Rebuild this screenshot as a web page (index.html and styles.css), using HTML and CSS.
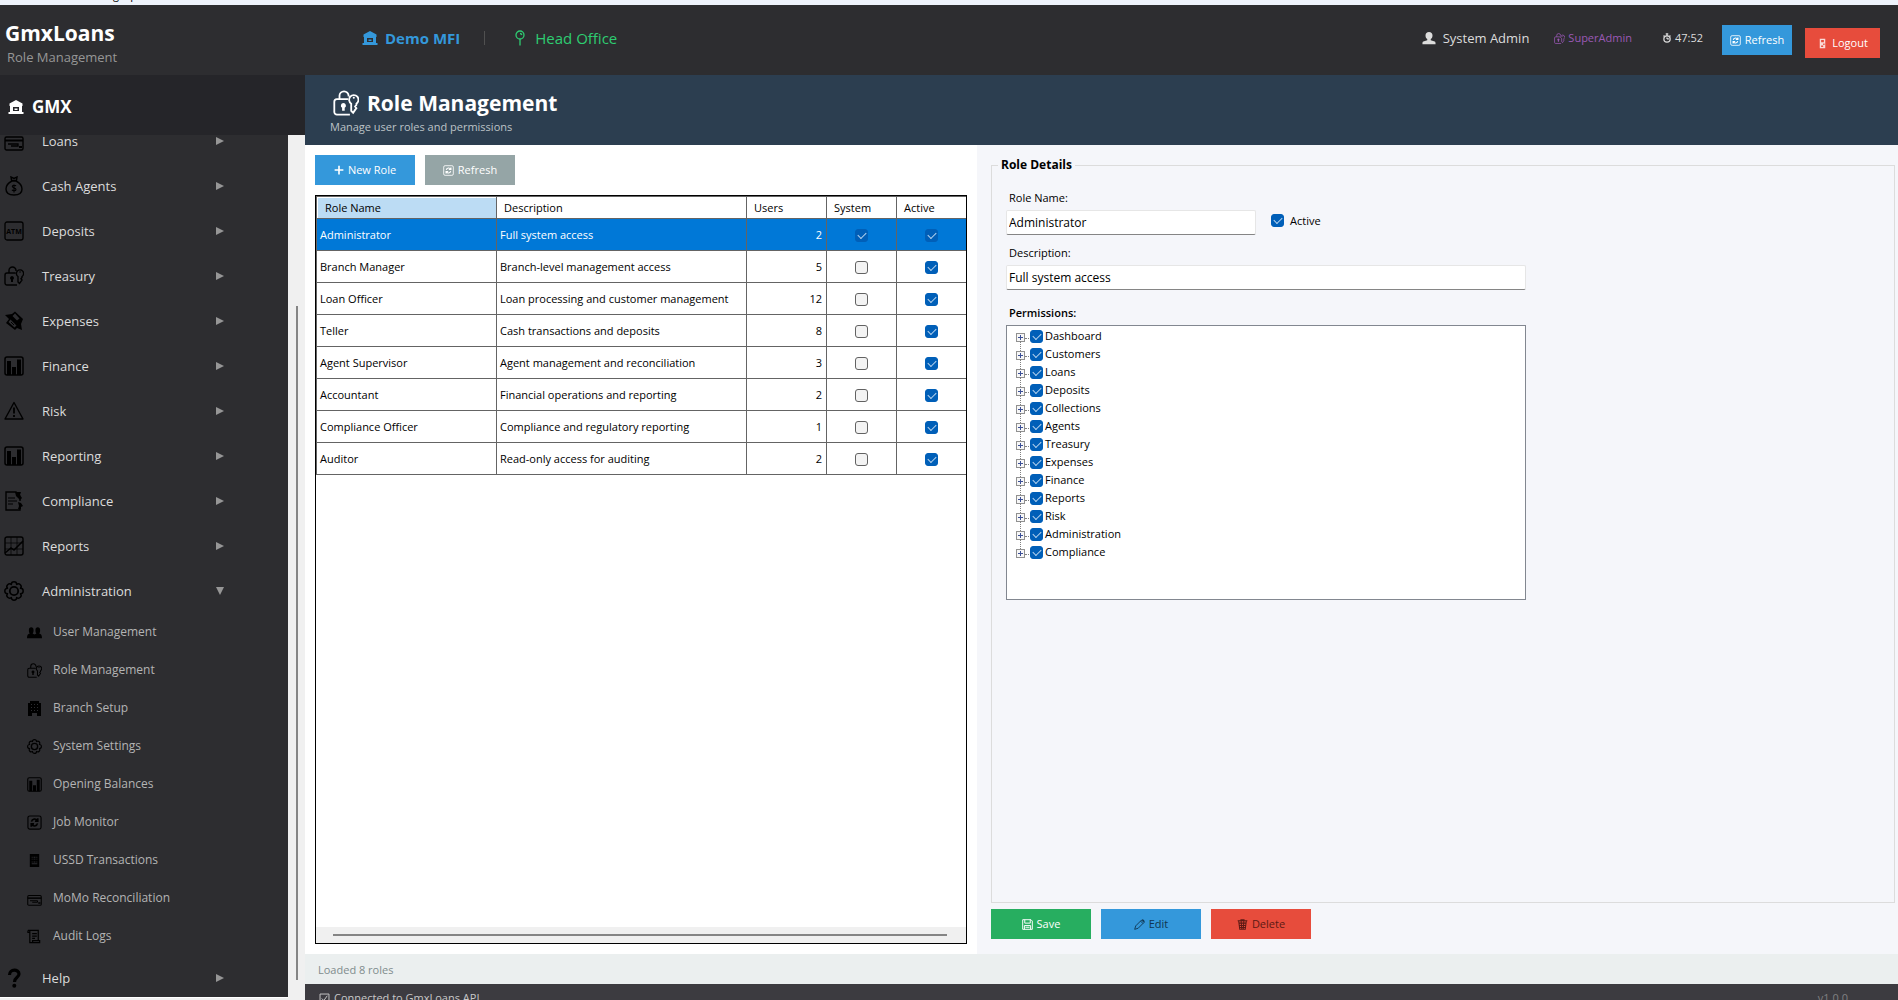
FILE: index.html
```html
<!DOCTYPE html>
<html lang="en">
<head>
    <meta charset="UTF-8">
    <meta name="viewport" content="width=device-width, initial-scale=1.0">
    <title>GmxLoans - Role Management</title>
    <link rel="stylesheet" href="styles.css">
</head>
<body>

<svg class="sprite" aria-hidden="true">
    <symbol id="i-bank" viewBox="0 0 16 16"><path fill="currentColor" fill-rule="evenodd" d="M8 1l6.500 3.500V7H14v6h1.500v2H.5v-2H2V7h-.5V4.500zM5 8v4h6V8zM6.500 9.500h3v1.500h-3z"/></symbol>
    <symbol id="i-pin" viewBox="0 0 16 16"><g fill="none" stroke="currentColor" stroke-width="1.300"><circle cx="8" cy="5" r="4"/><path d="M8 9v6.500M8 3.500a2 2 0 0 1 1.800 1.500"/></g></symbol>
    <symbol id="i-user" viewBox="0 0 16 16"><path fill="currentColor" d="M8 1c2.500 0 4 1.600 4 4 0 2-.8 3.300-2 4.200v1.300l4.500 1.500c.8.300 1 1 1 3H.5c0-2 .2-2.700 1-3L6 10.500V9.200C4.800 8.300 4 7 4 5c0-2.400 1.500-4 4-4z"/></symbol>
    <symbol id="i-lock" viewBox="0 0 20 20"><g fill="none" stroke="currentColor" stroke-width="1.400"><path d="M13 19H3a2 2 0 0 1-2-2V9a2 2 0 0 1 2-2h8.500M5 7V4.500a3.500 3.500 0 0 1 7 0V5M15.500 17.500 14 16v-5.500a3.600 3.600 0 1 1 4 0v1l-1 1.200 1 1.300-1 1.300z"/></g><circle cx="16" cy="6" r=".8" fill="currentColor"/><path fill="currentColor" d="M8 10a2 2 0 0 1 1 3.700V16H7v-2.300A2 2 0 0 1 8 10z"/></symbol>
    <symbol id="i-timer" viewBox="0 0 16 16"><g fill="none" stroke="currentColor" stroke-width="2"><circle cx="8" cy="9.500" r="5"/><path d="M6 1.500h4M8 2v3M8 9.500V7M8 9.500h3M12 4l1.500 1.500M4 4 2.500 5.500"/></g></symbol>
    <symbol id="i-sync" viewBox="0 0 16 16"><g fill="none" stroke="currentColor"><rect x="1" y="1" width="14" height="14" rx="2" stroke-width="1.200"/><path stroke-width="1.700" d="M11 6.200A3.300 3.300 0 0 0 4.800 7M5 9.800A3.300 3.300 0 0 0 11.200 9M11.500 3.500v3H8.500M4.500 12.500v-3h3"/></g></symbol>
    <symbol id="i-door" viewBox="0 0 16 16"><path fill="currentColor" fill-rule="evenodd" opacity=".8" d="M4 1h8v14H4zM6 3v3h4V3zM9 8v2h2V8zM6 11v2h3v-2z"/></symbol>
    <symbol id="i-card" viewBox="0 0 20 20"><g fill="none" stroke="currentColor"><rect x="1" y="6" width="18" height="13" rx="1.500" stroke-width="1.400"/><path stroke-width="2" d="M1 9.500h18"/><path stroke-width="1.300" d="M4 13h10v2H7"/></g><path fill="currentColor" d="M15 15h3v2h-3z"/></symbol>
    <symbol id="i-bag" viewBox="0 0 20 20"><g fill="none" stroke="currentColor" stroke-width="1.400"><path d="M8 5C4 7 2 10 2 13c0 4 3 6 8 6s8-2 8-6c0-3-2-6-6-8zM7.500 4.500 7 1l3 1.500L13 1l-.5 3.500z"/><path stroke-width="1.100" d="M12 10c-.5-1-3.700-1.200-3.700.6 0 1.700 3.700 1 3.700 2.800 0 1.800-3.500 1.600-4 .4M10 8.500v8"/></g></symbol>
    <symbol id="i-frame" viewBox="0 0 20 20"><rect x="1" y="1" width="18" height="18" rx="2" fill="none" stroke="currentColor" stroke-width="1.300"/></symbol>
    <symbol id="i-tag" viewBox="0 0 20 20"><path fill="currentColor" fill-rule="evenodd" d="M1 4 8 3l3-2.500L19 8l-2 5 1 6-5-2-2 2-9-7 3-4zm10-1.500L8.500 5 13 9.500l2.500-2zM4.500 11l6 5.500 2-2-6-6z"/><path d="m7 11 3 3" stroke="currentColor" stroke-width="1"/></symbol>
    <symbol id="i-bars" viewBox="0 0 20 20"><rect x="1" y="1" width="18" height="18" rx="2" fill="none" stroke="currentColor" stroke-width="1.500"/><path fill="currentColor" d="M3 5h4v14H3zM8 11h4v8H8zM13 3.500h4V19h-4z"/></symbol>
    <symbol id="i-warn" viewBox="0 0 20 20"><g fill="none" stroke="currentColor" stroke-width="1.400"><path stroke-linejoin="round" d="M10 1.500 19 18H1z"/><path stroke-width="1.800" d="M10 6.500v6M10 14v2"/></g></symbol>
    <symbol id="i-doc" viewBox="0 0 20 20"><path fill="none" stroke="currentColor" stroke-width="1.400" d="M16 8v2M16 17v2H2V1h10l4 4"/><path stroke="currentColor" d="M4 7h7M4 10h9M4 13h5"/><path fill="currentColor" d="M11 1h6l-1 3 2 3-2 2-4-4zM14 11l3 1 2 3-2 1v2h-3l1-3z"/></symbol>
    <symbol id="i-trend" viewBox="0 0 20 20"><g fill="none" stroke="currentColor"><rect x="1" y="1" width="18" height="18" rx="2" stroke-width="1.400"/><path stroke-width=".7" d="M7 1v18M13 1v18M1 7h18M1 13h18"/><path stroke-width="1.500" d="m1 17 6-5 3 2 9-9"/></g></symbol>
    <symbol id="i-gear" viewBox="0 0 20 20"><g fill="none" stroke="currentColor" stroke-width="1.500"><circle cx="10" cy="10" r="4.200" stroke-width="1.800"/><path stroke-linejoin="round" d="M7.300 3.500a2.700 2.700 0 0 1 5.400 0a2.700 2.700 0 0 1 3.800 3.800a2.700 2.700 0 0 1 0 5.400a2.700 2.700 0 0 1-3.800 3.800a2.700 2.700 0 0 1-5.400 0a2.700 2.700 0 0 1-3.800-3.800a2.700 2.700 0 0 1 0-5.400a2.700 2.700 0 0 1 3.800-3.800z"/></g></symbol>
    <symbol id="i-users" viewBox="0 0 16 16"><path fill="currentColor" d="M4.500 2.500C6 2.500 7 3.500 7 5.500S6.500 8.500 6 9l2 1 2-1c-.5-.5-1-1.500-1-3.500s1-3 2.500-3S14 3.500 14 5.500 13.500 8.500 13 9c2 .7 3 1.500 3 5H0c0-3.500 1-4.300 3-5-.5-.5-1-1.500-1-3.500s1-3 2.500-3z"/></symbol>
    <symbol id="i-building" viewBox="0 0 15 15"><path fill="currentColor" fill-rule="evenodd" d="M3 0h9v2h2v13h-4v-3H5v3H1V2h2zM4 3v1h1V3zm3 0v1h1V3zm3 0v1h1V3zM4 6v1h1V6zm3 0v1h1V6zm3 0v1h1V6zM4 9v1h1V9zm3 0v1h1V9zm3 0v1h1V9z"/></symbol>
    <symbol id="i-phone" viewBox="0 0 16 16"><path fill="currentColor" fill-rule="evenodd" d="M3 1h10v14H3zM5 4v1h1V4zm2 0v1h2V4zm3 0v1h1V4zM5 6v1h1V6zm2 0v1h2V6zm3 0v1h1V6zM5 9v1h1V9zm2 0v1h2V9zm3 0v1h1V9zM5 11v1h6v-1z"/></symbol>
    <symbol id="i-scroll" viewBox="0 0 16 16"><path fill="none" stroke="currentColor" stroke-width="1.300" d="M1 1.500h11v11M3 1.500v13h10.500v-2H6v2M1 1.500v2h2M5.500 5h5M5.500 7.500h5M5.500 10h3"/></symbol>
    <symbol id="i-help" viewBox="0 0 20 20"><path fill="none" stroke="currentColor" stroke-width="3.200" d="M5.500 7c0-6.500 9.500-6 9.500-1 0 3.500-4.500 3-4.500 8"/><circle cx="10.300" cy="17.800" r="2" fill="currentColor"/></symbol>
    <symbol id="i-plus" viewBox="0 0 16 16"><path stroke="currentColor" stroke-width="2.600" d="M8 1v14M1 8h14"/></symbol>
    <symbol id="i-save" viewBox="0 0 16 16"><path fill="none" stroke="currentColor" stroke-width="1.400" d="M1 1h12l2 2v12H1zM4 1v5h8V1M3.500 15V9.500h9V15M5 12h6"/></symbol>
    <symbol id="i-pencil" viewBox="0 0 16 16"><path fill="none" stroke="currentColor" stroke-width="1.300" d="m1 15 1.500-5L11 1.500 14.500 5 6 13.500zM9.500 3l3.500 3.500"/><path fill="currentColor" d="m11 1 2-.5L15.500 3 15 5z"/></symbol>
    <symbol id="i-trash" viewBox="0 0 16 16"><path fill="none" stroke="currentColor" stroke-width="1.500" d="M1 2.500h14M2.500 3l1.500 12h8L13.500 3M5 1h6M3 6h10M4 9.500h8M4 12.500h8M6 3l1 12M10 3 9 15"/></symbol>
    <symbol id="i-check" viewBox="0 0 16 16"><path fill="none" stroke="currentColor" stroke-width="1.400" d="M1.500 1.500h13v13h-13zM4 8l3 3 5-7"/></symbol>
    <symbol id="i-right" viewBox="0 0 8 8"><path fill="currentColor" d="M0 0 8 4 0 8z"/></symbol>
    <symbol id="i-down" viewBox="0 0 8 8"><path fill="currentColor" d="M0 0h8L4 8z"/></symbol>
</svg>

<div class="titlebar"><span>GmxLoans - Banking Operations</span></div>

<header class="topbar">
    <div class="product">
        <strong>GmxLoans</strong>
        <span>Role Management</span>
    </div>
    <div class="tenant">
        <svg class="icon-16"><use href="#i-bank"/></svg>
        <b>Demo MFI</b>
        <i class="divider"></i>
        <svg class="icon-16"><use href="#i-pin"/></svg>
        <span>Head Office</span>
    </div>
    <div class="session">
        <span class="who"><svg class="icon-14"><use href="#i-user"/></svg>System Admin</span>
        <span class="role"><svg class="icon-11"><use href="#i-lock"/></svg>SuperAdmin</span>
        <span class="timer"><svg class="icon-10"><use href="#i-timer"/></svg>47:52</span>
        <button type="button" class="btn blue top-refresh"><svg class="icon-11"><use href="#i-sync"/></svg>Refresh</button>
        <button type="button" class="btn red logout"><svg class="icon-11"><use href="#i-door"/></svg>Logout</button>
    </div>
</header>

<div class="shell">
    <aside class="sidebar">
        <div class="brand"><svg class="icon-16"><use href="#i-bank"/></svg>GMX</div>
        <div class="menu-area">
            <nav class="menu">
                <div class="menu-list">
                    <button type="button" class="item"><svg class="icon-20"><use href="#i-card"/></svg><span>Loans</span><svg class="arrow"><use href="#i-right"/></svg></button>
                    <button type="button" class="item"><svg class="icon-20"><use href="#i-bag"/></svg><span>Cash Agents</span><svg class="arrow"><use href="#i-right"/></svg></button>
                    <button type="button" class="item"><svg class="icon-20" viewBox="0 0 20 20"><use href="#i-frame"/><text class="atm" x="10" y="13" text-anchor="middle">ATM</text></svg><span>Deposits</span><svg class="arrow"><use href="#i-right"/></svg></button>
                    <button type="button" class="item"><svg class="icon-20"><use href="#i-lock"/></svg><span>Treasury</span><svg class="arrow"><use href="#i-right"/></svg></button>
                    <button type="button" class="item"><svg class="icon-20"><use href="#i-tag"/></svg><span>Expenses</span><svg class="arrow"><use href="#i-right"/></svg></button>
                    <button type="button" class="item"><svg class="icon-20"><use href="#i-bars"/></svg><span>Finance</span><svg class="arrow"><use href="#i-right"/></svg></button>
                    <button type="button" class="item"><svg class="icon-20"><use href="#i-warn"/></svg><span>Risk</span><svg class="arrow"><use href="#i-right"/></svg></button>
                    <button type="button" class="item"><svg class="icon-20"><use href="#i-bars"/></svg><span>Reporting</span><svg class="arrow"><use href="#i-right"/></svg></button>
                    <button type="button" class="item"><svg class="icon-20"><use href="#i-doc"/></svg><span>Compliance</span><svg class="arrow"><use href="#i-right"/></svg></button>
                    <button type="button" class="item"><svg class="icon-20"><use href="#i-trend"/></svg><span>Reports</span><svg class="arrow"><use href="#i-right"/></svg></button>
                    <button type="button" class="item"><svg class="icon-20"><use href="#i-gear"/></svg><span>Administration</span><svg class="arrow"><use href="#i-down"/></svg></button>
                    <a href="#" class="subitem"><svg class="icon-15"><use href="#i-users"/></svg>User Management</a>
                    <a href="#" class="subitem"><svg class="icon-15"><use href="#i-lock"/></svg>Role Management</a>
                    <a href="#" class="subitem"><svg class="icon-15"><use href="#i-building"/></svg>Branch Setup</a>
                    <a href="#" class="subitem"><svg class="icon-15"><use href="#i-gear"/></svg>System Settings</a>
                    <a href="#" class="subitem"><svg class="icon-15"><use href="#i-bars"/></svg>Opening Balances</a>
                    <a href="#" class="subitem"><svg class="icon-15"><use href="#i-sync"/></svg>Job Monitor</a>
                    <a href="#" class="subitem"><svg class="icon-15"><use href="#i-phone"/></svg>USSD Transactions</a>
                    <a href="#" class="subitem"><svg class="icon-15"><use href="#i-card"/></svg>MoMo Reconciliation</a>
                    <a href="#" class="subitem"><svg class="icon-15"><use href="#i-scroll"/></svg>Audit Logs</a>
                    <button type="button" class="item"><svg class="icon-20"><use href="#i-help"/></svg><span>Help</span><svg class="arrow"><use href="#i-right"/></svg></button>
                </div>
            </nav>
            <div class="vscroll"><div class="thumb"></div></div>
        </div>
    </aside>

    <main class="content">
        <div class="page-head">
            <h1><svg class="icon-26"><use href="#i-lock"/></svg>Role Management</h1>
            <p>Manage user roles and permissions</p>
        </div>

        <div class="panels">
            <section class="list-panel">
                <div class="toolbar">
                    <button type="button" class="btn blue new-role"><svg class="icon-10"><use href="#i-plus"/></svg>New Role</button>
                    <button type="button" class="btn gray list-refresh"><svg class="icon-11"><use href="#i-sync"/></svg>Refresh</button>
                </div>
                <div class="grid-box">
                    <table class="roles">
                        <colgroup><col class="c-name"><col><col class="c-users"><col class="c-flag"><col class="c-last"></colgroup>
                        <thead>
                            <tr><th class="sorted">Role Name</th><th>Description</th><th>Users</th><th>System</th><th>Active</th></tr>
                        </thead>
                        <tbody>
                            <tr class="selected"><td>Administrator</td><td>Full system access</td><td>2</td><td><input type="checkbox" aria-label="System" checked></td><td><input type="checkbox" aria-label="Active" checked></td></tr>
                            <tr><td>Branch Manager</td><td>Branch-level management access</td><td>5</td><td><input type="checkbox" aria-label="System"></td><td><input type="checkbox" aria-label="Active" checked></td></tr>
                            <tr><td>Loan Officer</td><td>Loan processing and customer management</td><td>12</td><td><input type="checkbox" aria-label="System"></td><td><input type="checkbox" aria-label="Active" checked></td></tr>
                            <tr><td>Teller</td><td>Cash transactions and deposits</td><td>8</td><td><input type="checkbox" aria-label="System"></td><td><input type="checkbox" aria-label="Active" checked></td></tr>
                            <tr><td>Agent Supervisor</td><td>Agent management and reconciliation</td><td>3</td><td><input type="checkbox" aria-label="System"></td><td><input type="checkbox" aria-label="Active" checked></td></tr>
                            <tr><td>Accountant</td><td>Financial operations and reporting</td><td>2</td><td><input type="checkbox" aria-label="System"></td><td><input type="checkbox" aria-label="Active" checked></td></tr>
                            <tr><td>Compliance Officer</td><td>Compliance and regulatory reporting</td><td>1</td><td><input type="checkbox" aria-label="System"></td><td><input type="checkbox" aria-label="Active" checked></td></tr>
                            <tr><td>Auditor</td><td>Read-only access for auditing</td><td>2</td><td><input type="checkbox" aria-label="System"></td><td><input type="checkbox" aria-label="Active" checked></td></tr>
                        </tbody>
                    </table>
                    <div class="hscroll"><div class="thumb"></div></div>
                </div>
            </section>

            <form class="detail-panel" action="#">
                <fieldset class="details">
                    <legend>Role Details</legend>
                    <label class="caption" for="roleName">Role Name:</label>
                    <div class="name-row">
                        <input type="text" id="roleName" value="Administrator">
                        <label class="active"><input type="checkbox" checked>Active</label>
                    </div>
                    <label class="caption" for="roleDesc">Description:</label>
                    <input type="text" id="roleDesc" value="Full system access">
                    <div class="caption strong" id="permLabel">Permissions:</div>
                    <ul class="tree" aria-labelledby="permLabel">
                        <li><button type="button" class="expand" aria-label="Expand"></button><label><input type="checkbox" checked>Dashboard</label></li>
                        <li><button type="button" class="expand" aria-label="Expand"></button><label><input type="checkbox" checked>Customers</label></li>
                        <li><button type="button" class="expand" aria-label="Expand"></button><label><input type="checkbox" checked>Loans</label></li>
                        <li><button type="button" class="expand" aria-label="Expand"></button><label><input type="checkbox" checked>Deposits</label></li>
                        <li><button type="button" class="expand" aria-label="Expand"></button><label><input type="checkbox" checked>Collections</label></li>
                        <li><button type="button" class="expand" aria-label="Expand"></button><label><input type="checkbox" checked>Agents</label></li>
                        <li><button type="button" class="expand" aria-label="Expand"></button><label><input type="checkbox" checked>Treasury</label></li>
                        <li><button type="button" class="expand" aria-label="Expand"></button><label><input type="checkbox" checked>Expenses</label></li>
                        <li><button type="button" class="expand" aria-label="Expand"></button><label><input type="checkbox" checked>Finance</label></li>
                        <li><button type="button" class="expand" aria-label="Expand"></button><label><input type="checkbox" checked>Reports</label></li>
                        <li><button type="button" class="expand" aria-label="Expand"></button><label><input type="checkbox" checked>Risk</label></li>
                        <li><button type="button" class="expand" aria-label="Expand"></button><label><input type="checkbox" checked>Administration</label></li>
                        <li><button type="button" class="expand" aria-label="Expand"></button><label><input type="checkbox" checked>Compliance</label></li>
                    </ul>
                </fieldset>
                <div class="actions">
                    <button type="button" class="btn green"><svg class="icon-11"><use href="#i-save"/></svg>Save</button>
                    <button type="button" class="btn blue dim-blue"><svg class="icon-11"><use href="#i-pencil"/></svg>Edit</button>
                    <button type="button" class="btn red dim-red"><svg class="icon-11"><use href="#i-trash"/></svg>Delete</button>
                </div>
            </form>
        </div>

        <div class="status">Loaded 8 roles</div>
        <footer class="footer">
            <span><svg class="icon-11"><use href="#i-check"/></svg>Connected to GmxLoans API</span>
            <span class="version">v1.0.0</span>
        </footer>
    </main>
</div>

</body>
</html>
```
FILE: styles.css
```css
* {
    box-sizing: border-box;
}

body {
    margin: 0;
    height: 100vh;
    display: flex;
    flex-direction: column;
    overflow: hidden;
    font-family: "Open Sans", "Noto Sans", sans-serif;
    font-size: 11px;
    line-height: 16px;
    color: #000;
    background-color: #f0f0f0;
}

button,
input {
    font: inherit;
    color: inherit;
}

svg {
    display: block;
    flex: none;
}

.sprite {
    position: absolute;
    width: 0;
    height: 0;
}

.icon-10 { width: 10px; height: 10px; }
.icon-11 { width: 11px; height: 11px; }
.icon-14 { width: 14px; height: 14px; }
.icon-15 { width: 15px; height: 15px; }
.icon-16 { width: 16px; height: 16px; }
.icon-20 { width: 20px; height: 20px; }
.icon-26 { width: 26px; height: 26px; }

/* window title, only its lower edge shows */
.titlebar {
    flex: none;
    height: 5px;
    padding-left: 14px;
    display: flex;
    align-items: flex-end;
    overflow: hidden;
    background-color: #eef3fb;
}

.titlebar span {
    padding-bottom: 4px;
    line-height: 12px;
}

/* top bar */
.topbar {
    flex: none;
    height: 70px;
    display: flex;
    background-color: #2d2d30;
    color: #dcdcdc;
}

.product {
    width: 362px;
    padding: 14px 0 0 5px;
    display: flex;
    flex-direction: column;
}

.product strong {
    font-size: 21px;
    line-height: 28px;
    color: #fff;
}

.product span {
    padding-left: 2px;
    font-size: 13px;
    line-height: 20px;
    color: #969696;
}

.tenant {
    height: 65px;
    display: flex;
    align-items: center;
    gap: 7px;
    font-size: 15px;
    color: #2ecc71;
}

.tenant b,
.tenant svg:first-child {
    color: #3498db;
}

.divider {
    width: 1px;
    height: 14px;
    margin: 0 20px 0 17px;
    background-color: #505050;
}

.session {
    margin-left: auto;
    padding: 20px 18px 0 0;
    display: flex;
    align-items: flex-start;
    line-height: 26px;
}

.session span {
    display: flex;
    align-items: center;
}

.who {
    gap: 7px;
    margin-right: 25px;
    font-size: 13px;
}

.role {
    gap: 3px;
    margin-right: 30px;
    color: #9b59b6;
}

.timer {
    gap: 3px;
    margin-right: 19px;
}

.btn {
    height: 30px;
    padding: 0;
    border: none;
    display: flex;
    align-items: center;
    justify-content: center;
    gap: 4px;
    line-height: 16px;
    color: #fff;
    cursor: pointer;
}

.blue { background-color: #3498db; }
.red { background-color: #e74c3c; }
.green { background-color: #27ae60; }
.gray { background-color: #95a5a6; }

.top-refresh {
    width: 70px;
    margin-right: 13px;
}

.logout {
    width: 75px;
    margin-top: 3px;
}

/* sidebar */
.shell {
    flex: 1;
    min-height: 0;
    display: flex;
}

.sidebar {
    width: 305px;
    display: flex;
    flex-direction: column;
    background-color: #f0f0f0;
}

.brand {
    height: 60px;
    padding: 4px 0 0 8px;
    display: flex;
    align-items: center;
    gap: 8px;
    font-size: 17px;
    font-weight: bold;
    background-color: #252529;
    color: #fff;
}

.menu-area {
    flex: 1;
    min-height: 0;
    margin-bottom: 2px;
    display: flex;
}

.menu {
    flex: 1;
    overflow: hidden;
    background-color: #2d2d30;
    border-bottom: 1px solid #fff;
}

/* the list is scrolled down, its first row is partly hidden */
.menu-list {
    margin-top: -17px;
}

.item {
    width: 100%;
    height: 45px;
    padding: 0 64px 0 4px;
    border: none;
    display: flex;
    align-items: center;
    gap: 18px;
    background: none;
    font-size: 13px;
    text-align: left;
    color: #dcdcdc;
}

.item svg,
.subitem svg {
    color: #000;
}

.item .arrow {
    width: 8px;
    height: 8px;
    margin-left: auto;
    color: #969696;
}

.atm {
    font-size: 7px;
    font-weight: bold;
}

.subitem {
    height: 38px;
    padding-left: 27px;
    display: flex;
    align-items: center;
    gap: 11px;
    font-size: 12px;
    text-decoration: none;
    color: #b4b4b4;
}

.vscroll {
    width: 17px;
    padding: 171px 0 18px 8px;
    background-color: #f0f0f0;
}

.vscroll .thumb {
    width: 2px;
    height: 100%;
    background-color: #858585;
}

/* page */
.content {
    flex: 1;
    min-width: 0;
    display: flex;
    flex-direction: column;
}

.page-head {
    height: 70px;
    padding: 14px 25px 0;
    background-color: #2c3e50;
}

.page-head h1 {
    margin: 0;
    padding-left: 3px;
    display: flex;
    align-items: center;
    gap: 8px;
    font-size: 21px;
    line-height: 28px;
    color: #fff;
}

.page-head p {
    margin: 2px 0 0;
    color: #bdc3c7;
}

.panels {
    flex: 1;
    min-height: 0;
    display: grid;
    grid-template-columns: 672fr 921fr;
}

.list-panel {
    padding: 10px;
    display: flex;
    flex-direction: column;
    gap: 10px;
    background-color: #fff;
}

.toolbar {
    display: flex;
    gap: 10px;
}

.new-role {
    width: 100px;
}

.list-refresh {
    width: 90px;
}

.grid-box {
    flex: 1;
    border: 1px solid #000;
    display: flex;
    flex-direction: column;
}

.roles {
    width: 100%;
    table-layout: fixed;
    border-collapse: separate;
    border-spacing: 0;
    border: solid #646464;
    border-width: 1px 0 0 1px;
}

.c-name { width: 180px; }
.c-users { width: 80px; }
.c-flag { width: 70px; }
.c-last { width: 69px; }

.roles th,
.roles td {
    height: 32px;
    padding: 0 4px 0 3px;
    border: solid #646464;
    border-width: 0 1px 1px 0;
    text-align: left;
    white-space: nowrap;
}

.roles th {
    height: 22px;
    padding: 0 7px;
    font-weight: normal;
}

.roles th:last-child,
.roles td:last-child {
    border-right: none;
}

.roles .sorted {
    padding-left: 8px;
    background-color: #bcdcf4;
    box-shadow: inset 1px 1px 0 #fff;
}

.roles td:nth-child(3) {
    text-align: right;
}

.roles td:nth-child(4),
.roles td:nth-child(5) {
    padding: 0;
    text-align: center;
}

.selected {
    background-color: #0078d7;
    color: #fff;
}

input[type="checkbox"] {
    appearance: none;
    flex: none;
    position: relative;
    width: 13px;
    height: 13px;
    margin: 0;
    border: 1px solid #626262;
    border-radius: 3px;
    background-color: #f3f3f3;
    vertical-align: middle;
}

input[type="checkbox"]:checked {
    border-color: #005fb8;
    background-color: #005fb8;
}

input[type="checkbox"]:checked::after {
    content: "";
    position: absolute;
    left: 2px;
    top: 2px;
    width: 7px;
    height: 4px;
    border: solid #b8d4ee;
    border-width: 0 0 1px 1px;
    transform: rotate(-45deg);
}

.hscroll {
    height: 16px;
    margin-top: auto;
    padding: 7px 19px 0 17px;
    background-color: #f0f0f0;
}

.hscroll .thumb {
    height: 2px;
    background-color: #858585;
}

/* role details */
.detail-panel {
    padding: 10px 3px 15px 14px;
    display: flex;
    flex-direction: column;
    gap: 6px;
    background-color: #f5f6fa;
}

.details {
    flex: 1;
    min-width: 0;
    margin: 0;
    padding: 15px 14px 0;
    border: 1px solid #dcdcdc;
}

.details legend {
    margin-left: -8px;
    padding: 0 3px;
    font-size: 12px;
    font-weight: bold;
    line-height: 20px;
}

.caption {
    display: block;
    padding-left: 3px;
    line-height: 16px;
}

.strong {
    font-weight: 600;
}

.details input[type="text"] {
    display: block;
    width: 520px;
    max-width: 100%;
    height: 25px;
    margin: 4px 0 15px;
    padding: 0 2px;
    border: 1px solid #e6e6e6;
    border-bottom-color: #858585;
    border-radius: 2px;
    background-color: #fff;
    font-size: 12px;
}

.details .name-row input[type="text"] {
    width: 250px;
    margin-bottom: 10px;
}

.name-row {
    display: flex;
    gap: 15px;
}

.active {
    height: 29px;
    display: flex;
    align-items: center;
    gap: 6px;
}

.tree {
    width: 520px;
    max-width: 100%;
    height: 275px;
    margin: 4px 0 0;
    padding: 1px 0 0 9px;
    border: 1px solid #828790;
    background-color: #fff;
    list-style: none;
}

.tree li {
    position: relative;
    height: 18px;
    display: flex;
    align-items: center;
}

.tree label {
    display: flex;
    align-items: center;
    gap: 2px;
}

/* dotted connector between the expanders */
.tree li + li::before {
    content: "";
    position: absolute;
    left: 4px;
    top: -4px;
    height: 10px;
    border-left: 1px dotted #808080;
}

.expand {
    width: 9px;
    height: 9px;
    margin: 2px 5px 0 0;
    padding: 0;
    border: 1px solid #919191;
    background: linear-gradient(#3b4f96, #3b4f96) center / 5px 1px no-repeat, linear-gradient(#3b4f96, #3b4f96) center / 1px 5px no-repeat, #f7f7f7;
}

.expand::after {
    content: "";
    display: block;
    width: 4px;
    margin: 3px 0 0 8px;
    border-top: 1px dotted #808080;
}

.actions {
    display: flex;
    gap: 10px;
}

.actions .btn {
    width: 100px;
}

.actions .dim-blue {
    color: #103550;
}

.actions .dim-red {
    color: #5c1a14;
}

.status {
    height: 30px;
    padding-left: 13px;
    line-height: 32px;
    background-color: #ebefef;
    color: #7f8c8d;
}

.footer {
    height: 16px;
    padding: 0 50px 0 14px;
    display: flex;
    justify-content: space-between;
    overflow: hidden;
    line-height: 28px;
    background-color: #3c3b40;
    color: #c8c8c8;
}

.footer span {
    height: 28px;
    display: flex;
    align-items: center;
    gap: 4px;
}

.footer .version {
    color: #808080;
}
```
